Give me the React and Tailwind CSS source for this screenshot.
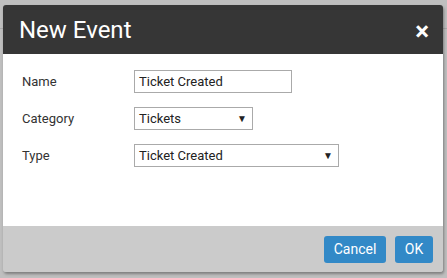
import React from 'react';

export default function App() {
  return (
    <div className="relative w-[447px] h-[278px] bg-[#bfbfbf] overflow-hidden" style={{ fontFamily: 'Roboto, "Liberation Sans", sans-serif' }}>
      {/* page behind the modal */}
      <div className="absolute left-0 right-0 top-[28px] h-px bg-[#a9a9a9]"></div>

      {/* Modal */}
      <div className="absolute left-[3px] top-[5px] w-[440px] h-[267px] rounded-[3px] overflow-hidden flex flex-col shadow-[1px_2px_3px_rgba(0,0,0,0.35)]">
        <div className="h-[49px] bg-[#363636] flex items-center justify-between pl-[16px] pr-[14px]">
          <span className="text-white text-[24px] leading-none">New Event</span>
          <span className="text-white text-[26px] font-bold leading-none mt-[2px]">×</span>
        </div>

        <div className="h-[172px] bg-white pt-[16px] pl-[19px] flex flex-col gap-[14px] text-[13px] text-[#333]">
          <div className="flex items-center h-[23px]">
            <span className="w-[112px]">Name</span>
            <div className="w-[158px] h-[23px] border border-[#aaa] px-[4px] flex items-center text-[#222] text-[13px]">Ticket Created</div>
          </div>
          <div className="flex items-center h-[23px]">
            <span className="w-[112px]">Category</span>
            <div className="w-[119px] h-[23px] border border-[#aaa] px-[4px] flex items-center justify-between text-[#222] text-[13px]">
              <span>Tickets</span>
              <span className="text-[10px] mr-[1px]">▼</span>
            </div>
          </div>
          <div className="flex items-center h-[23px]">
            <span className="w-[112px]">Type</span>
            <div className="w-[205px] h-[23px] border border-[#aaa] px-[4px] flex items-center justify-between text-[#222] text-[13px]">
              <span>Ticket Created</span>
              <span className="text-[10px] mr-[1px]">▼</span>
            </div>
          </div>
        </div>

        <div className="flex-1 bg-[#cbcbcb] flex items-start justify-end gap-[9px] pt-[10px] pr-[10px]">
          <button className="h-[27px] w-[62px] rounded-[3px] bg-[#3289c7] text-white text-[14px]">Cancel</button>
          <button className="h-[27px] w-[38px] rounded-[3px] bg-[#3289c7] text-white text-[14px]">OK</button>
        </div>
      </div>
    </div>
  );
}
